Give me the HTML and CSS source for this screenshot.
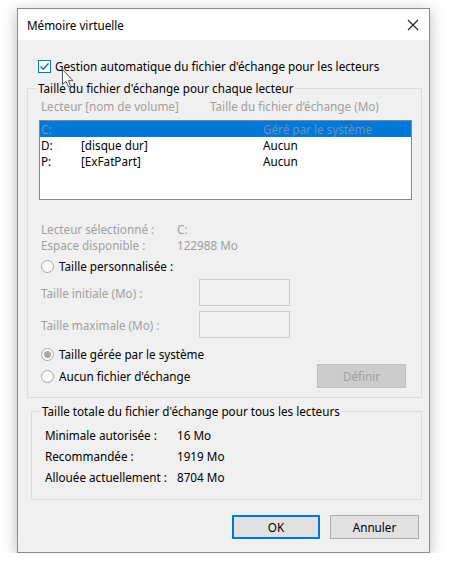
FILE: index.html
```html
<!DOCTYPE html>
<html lang="fr">
<head>
    <meta charset="UTF-8">
    <title>Mémoire virtuelle</title>
    <link rel="stylesheet" href="styles.css">
</head>
<body>

<div class="window">
    <div class="titlebar">
        <span class="title">Mémoire virtuelle</span>
        <svg class="close" width="12" height="12" viewBox="0 0 12 12">
            <path d="M1 1 L11 11 M11 1 L1 11" stroke="#222" stroke-width="1.1" fill="none"/>
        </svg>
    </div>

    <div class="content">
        <div class="auto-row">
            <span class="checkbox">
                <svg width="11" height="11" viewBox="0 0 11 11">
                    <path d="M1.5 5.5 L4.3 8.3 L9.5 2.5" stroke="#1d65b3" stroke-width="1.4" fill="none"/>
                </svg>
            </span>
            <span>Gestion automatique du fichier d'échange pour les lecteurs</span>
        </div>

        <!-- curseur de la souris -->
        <svg class="cursor" width="12" height="19" viewBox="0 0 12 19">
            <path d="M0.5 0.5 L0.5 15.5 L4 12.3 L6.4 18 L8.6 17 L6.3 11.6 L11 11.6 Z" fill="#fdfdfd" stroke="#555" stroke-width="1"/>
        </svg>

        <fieldset class="group group-drives">
            <legend>Taille du fichier d'échange pour chaque lecteur</legend>

            <div class="list-head">
                <span class="head-drive">Lecteur [nom de volume]</span>
                <span>Taille du fichier d’échange (Mo)</span>
            </div>

            <div class="listbox">
                <div class="list-row selected">
                    <span class="col-drive">C:</span>
                    <span class="col-name"></span>
                    <span>Géré par le système</span>
                </div>
                <div class="list-row">
                    <span class="col-drive">D:</span>
                    <span class="col-name">[disque dur]</span>
                    <span>Aucun</span>
                </div>
                <div class="list-row">
                    <span class="col-drive">P:</span>
                    <span class="col-name">[ExFatPart]</span>
                    <span>Aucun</span>
                </div>
            </div>

            <div class="info">
                <div class="info-row"><span class="info-label">Lecteur sélectionné :</span><span>C:</span></div>
                <div class="info-row"><span class="info-label">Espace disponible :</span><span>122988 Mo</span></div>
            </div>

            <div class="radio-row custom">
                <span class="radio"></span>
                <span>Taille personnalisée :</span>
            </div>

            <div class="field-row first">
                <span class="field-label">Taille initiale (Mo) :</span>
                <span class="field-input"></span>
            </div>
            <div class="field-row">
                <span class="field-label">Taille maximale (Mo) :</span>
                <span class="field-input"></span>
            </div>

            <div class="radio-row system">
                <span class="radio checked"></span>
                <span>Taille gérée par le système</span>
            </div>

            <div class="last-row">
                <div class="radio-row">
                    <span class="radio"></span>
                    <span>Aucun fichier d'échange</span>
                </div>
                <button class="btn btn-set" disabled>Définir</button>
            </div>
        </fieldset>

        <fieldset class="group group-total">
            <legend>Taille totale du fichier d'échange pour tous les lecteurs</legend>
            <div class="total-row"><span class="total-label">Minimale autorisée :</span><span>16 Mo</span></div>
            <div class="total-row"><span class="total-label">Recommandée :</span><span>1919 Mo</span></div>
            <div class="total-row"><span class="total-label">Allouée actuellement :</span><span>8704 Mo</span></div>
        </fieldset>

        <div class="footer">
            <button class="btn btn-ok">OK</button>
            <button class="btn btn-cancel">Annuler</button>
        </div>
    </div>
</div>

</body>
</html>
```

FILE: styles.css
```css
body {
    margin: 0;
    padding: 0;
    background-color: #fff;
    font-family: "Noto Sans", "Open Sans", sans-serif;
    font-size: 11.7px;
    color: #000;
}

.window {
    margin: 8px 0 0 17px;
    width: 411px;
    height: 543px;
    border: 1px solid #8a8a8a;
    background-color: #f0f0f0;
    box-shadow: 0 3px 14px rgba(0, 0, 0, 0.28);
    display: flex;
    flex-direction: column;
}

.titlebar {
    height: 31px;
    background-color: #fff;
    display: flex;
    align-items: center;
    padding-left: 9px;
    padding-right: 10px;
}

.title {
    flex: 1;
}

.content {
    position: relative;
    flex: 1;
}

.auto-row {
    display: flex;
    align-items: center;
    height: 16px;
    margin-top: 18px;
    padding-left: 20px;
}

.checkbox {
    width: 11px;
    height: 11px;
    border: 1px solid #0078d7;
    background-color: #fff;
    margin-right: 4px;
    display: flex;
}

.cursor {
    position: absolute;
    left: 44px;
    top: 29px;
}

.group {
    border: 1px solid #dcdcdc;
    margin: 0;
    min-width: 0;
}

.group legend {
    line-height: 16px;
    padding: 0 1px;
    margin-left: -2px;
}

.group-drives {
    margin: 6px 7px 0 9px;
    padding: 2px 9px 9px 11px;
}

.list-head {
    display: flex;
    line-height: 16px;
    padding-left: 2px;
    color: #a0a0a0;
}

.head-drive {
    width: 169px;
}

.listbox {
    margin-top: 6px;
    height: 78px;
    border: 1px solid #828790;
    background-color: #fff;
}

.list-row {
    display: flex;
    height: 16px;
    line-height: 16px;
    padding-left: 1px;
}

.list-row.selected {
    background-color: #0078d7;
    color: #6f92b8;
}

.col-drive {
    width: 40px;
}

.col-name {
    width: 182px;
}

.info {
    margin-top: 21px;
    color: #a0a0a0;
}

.info-row {
    display: flex;
    line-height: 16px;
    padding-left: 2px;
}

.info-label {
    width: 136px;
}

.radio-row {
    display: flex;
    align-items: center;
    height: 16px;
    padding-left: 2px;
}

.radio {
    box-sizing: border-box;
    width: 13px;
    height: 13px;
    border: 1px solid #a8a8a8;
    border-radius: 50%;
    background-color: #fafafa;
    margin-right: 5px;
    display: flex;
    align-items: center;
    justify-content: center;
}

.radio.checked::after {
    content: "";
    width: 7px;
    height: 7px;
    border-radius: 50%;
    background-color: #a8a8a8;
}

.custom {
    margin-top: 5px;
}

.field-row {
    display: flex;
    align-items: center;
    margin-top: 5px;
    padding-left: 2px;
    color: #a0a0a0;
}

.field-label {
    width: 158px;
}

.field-input {
    box-sizing: border-box;
    width: 91px;
    height: 27px;
    border: 1px solid #cccccc;
    background-color: #f0f0f0;
}

.system {
    margin-top: 8px;
}

.last-row {
    display: flex;
    align-items: center;
    justify-content: space-between;
    margin-top: 2px;
}

.btn {
    box-sizing: border-box;
    font-family: "Noto Sans", "Open Sans", sans-serif;
    font-size: 11.7px;
    height: 24px;
    padding: 0;
    border: 1px solid #adadad;
    background-color: #e1e1e1;
    color: #000;
}

.btn-set {
    width: 89px;
    margin-right: 6px;
    background-color: #cccccc;
    border-color: #bfbfbf;
    color: #a0a0a0;
}

.group-total {
    margin: 5px 7px 0 13px;
    padding: 6px 10px 11px 13px;
}

.group-total legend {
    margin-left: -4px;
}

.total-row {
    display: flex;
    line-height: 21px;
}

.total-label {
    width: 132px;
}

.footer {
    display: flex;
    justify-content: flex-end;
    gap: 10px;
    margin-top: 15px;
    padding-right: 10px;
}

.btn-ok {
    width: 88px;
    border: 2px solid #0078d7;
}

.btn-cancel {
    width: 89px;
}
```
